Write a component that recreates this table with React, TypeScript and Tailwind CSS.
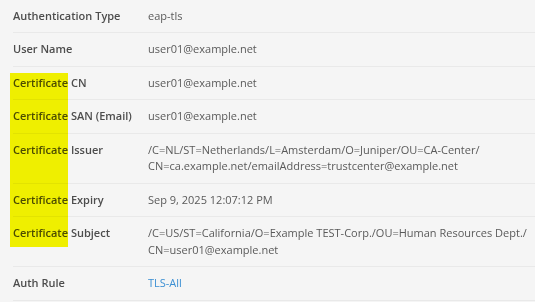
const rows: { label: string; value: string[]; link?: boolean }[] = [
  { label: 'Authentication Type', value: ['eap-tls'] },
  { label: 'User Name', value: ['user01@example.net'] },
  { label: 'Certificate CN', value: ['user01@example.net'] },
  { label: 'Certificate SAN (Email)', value: ['user01@example.net'] },
  {
    label: 'Certificate Issuer',
    value: [
      '/C=NL/ST=Netherlands/L=Amsterdam/O=Juniper/OU=CA-Center/',
      'CN=ca.example.net/emailAddress=trustcenter@example.net',
    ],
  },
  { label: 'Certificate Expiry', value: ['Sep 9, 2025 12:07:12 PM'] },
  {
    label: 'Certificate Subject',
    value: [
      '/C=US/ST=California/O=Example TEST-Corp./OU=Human Resources Dept./',
      'CN=user01@example.net',
    ],
  },
  { label: 'Auth Rule', value: ['TLS-All'], link: true },
];

export default function App() {
  return (
    <div
      className="relative w-[535px] h-[302px] overflow-hidden bg-[#f5f5f5] pl-[13px] text-[11px] leading-[16.5px]"
      style={{ fontFamily: '"Open Sans", sans-serif' }}
    >
      {rows.map((row, i) => (
        <div
          key={row.label}
          className={`flex border-b border-[#e9e9e9] pb-[8px] ${i === 0 ? 'pt-[7.5px]' : 'pt-[8px]'}`}
        >
          <div className="w-[135px] shrink-0 font-semibold text-[#4d4d4d]">{row.label}</div>
          <div className={row.link ? 'text-[#3b8fd3]' : 'text-[#5a5a5a]'}>
            {row.value.map((line) => (
              <div key={line} className="whitespace-nowrap">{line}</div>
            ))}
          </div>
        </div>
      ))}

      {/* highlight marker over the "Certificate" labels */}
      <div className="absolute left-[10px] top-[73px] w-[58px] h-[174px] bg-[#f9f900] mix-blend-multiply pointer-events-none" />
    </div>
  );
}
